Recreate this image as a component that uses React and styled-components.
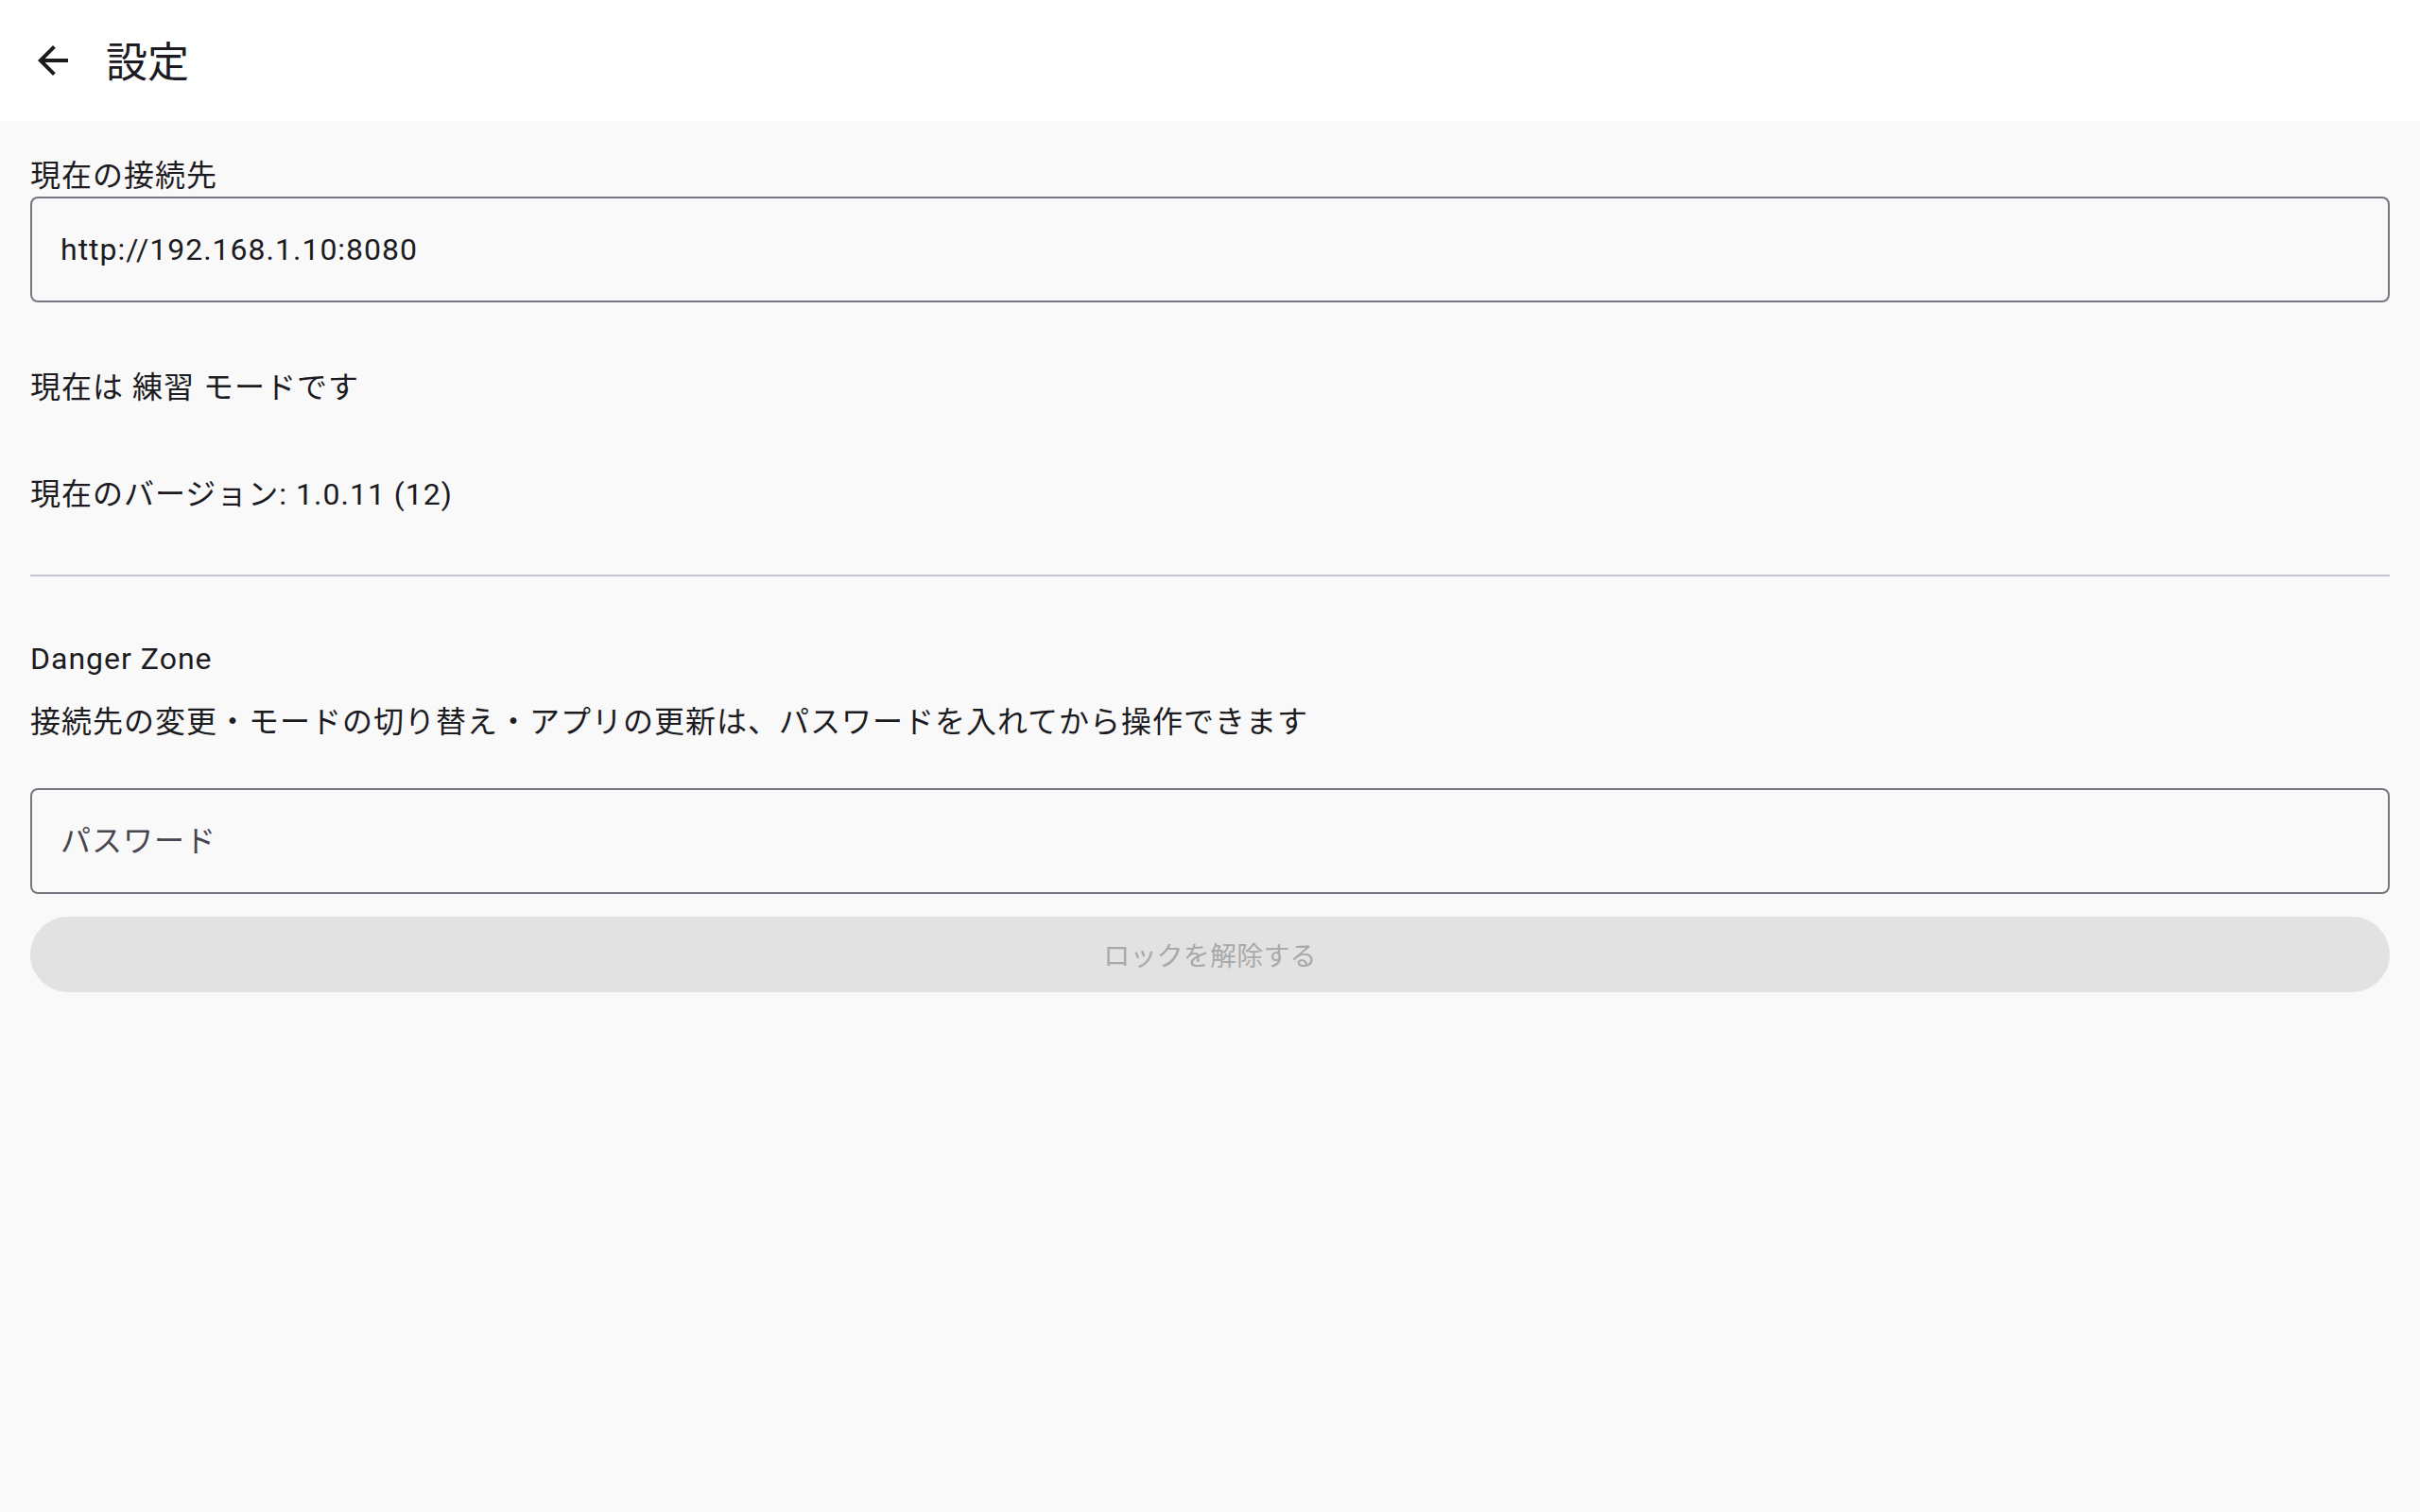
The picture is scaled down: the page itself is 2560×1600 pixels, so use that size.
import styled, { createGlobalStyle } from "styled-components";

const GlobalStyle = createGlobalStyle`
  html, body {
    margin: 0;
    padding: 0;
    background: #f9f9f9;
  }
  body {
    font-family: Roboto, "Noto Sans CJK JP", sans-serif;
    color: #1c1b1f;
  }
`;

const Page = styled.div`
  min-height: 100vh;
  background: #f9f9f9;
`;

const TopBar = styled.header`
  height: 128px;
  background: #ffffff;
  display: flex;
  align-items: center;
  padding-left: 32px;
  gap: 32px;
`;

const BackButton = styled.button`
  width: 48px;
  height: 48px;
  padding: 0;
  border: none;
  background: transparent;
  display: flex;
  align-items: center;
  justify-content: center;
  color: #1c1b1f;
  cursor: pointer;
`;

const Title = styled.h1`
  margin: 0;
  padding-top: 6px;
  font-size: 44px;
  font-weight: 400;
  line-height: 50px;
  color: #1c1b1f;
`;

const Content = styled.main`
  display: flex;
  flex-direction: column;
  padding: 32px;
`;

const Text = styled.div`
  font-size: 32px;
  padding-top: 4px;
  line-height: 44px;
  letter-spacing: 1px;
  margin-top: ${(props) => props.$top || 0}px;
`;

const Field = styled.input`
  box-sizing: border-box;
  width: 100%;
  height: 112px;
  margin: ${(props) => props.$top || 0}px 0 0;
  padding: 0 30px;
  border: 2px solid #79747e;
  border-radius: 8px;
  background: transparent;
  font-family: inherit;
  font-size: 32px;
  letter-spacing: 1px;
  color: #1c1b1f;
  outline: none;

  &::placeholder {
    color: #49454f;
  }
`;

const Divider = styled.hr`
  margin: 63px 0 0;
  border: none;
  height: 2px;
  background: #cac4d0;
`;

const UnlockButton = styled.button`
  margin-top: 24px;
  height: 80px;
  border: none;
  border-radius: 40px;
  background: #e2e2e2;
  color: #a9a8aa;
  font-family: inherit;
  font-size: 28px;
  letter-spacing: 0.2px;
  font-weight: 400;
`;

function ArrowBack() {
  return (
    <svg width="48" height="48" viewBox="0 0 24 24" fill="currentColor">
      <path d="M20 11H7.83l5.59-5.59L12 4l-8 8 8 8 1.41-1.41L7.83 13H20v-2z" />
    </svg>
  );
}

export default function App() {
  return (
    <Page>
      <GlobalStyle />
      <TopBar>
        <BackButton aria-label="戻る">
          <ArrowBack />
        </BackButton>
        <Title>設定</Title>
      </TopBar>
      <Content>
        <Text>現在の接続先</Text>
        <Field readOnly value="http://192.168.1.10:8080" />
        <Text $top={64}>現在は 練習 モードです</Text>
        <Text $top={65}>現在のバージョン: 1.0.11 (12)</Text>
        <Divider />
        <Text $top={61}>Danger Zone</Text>
        <Text $top={19}>
          接続先の変更・モードの切り替え・アプリの更新は、パスワードを入れてから操作できます
        </Text>
        <Field type="password" placeholder="パスワード" $top={48} />
        <UnlockButton disabled>ロックを解除する</UnlockButton>
      </Content>
    </Page>
  );
}
